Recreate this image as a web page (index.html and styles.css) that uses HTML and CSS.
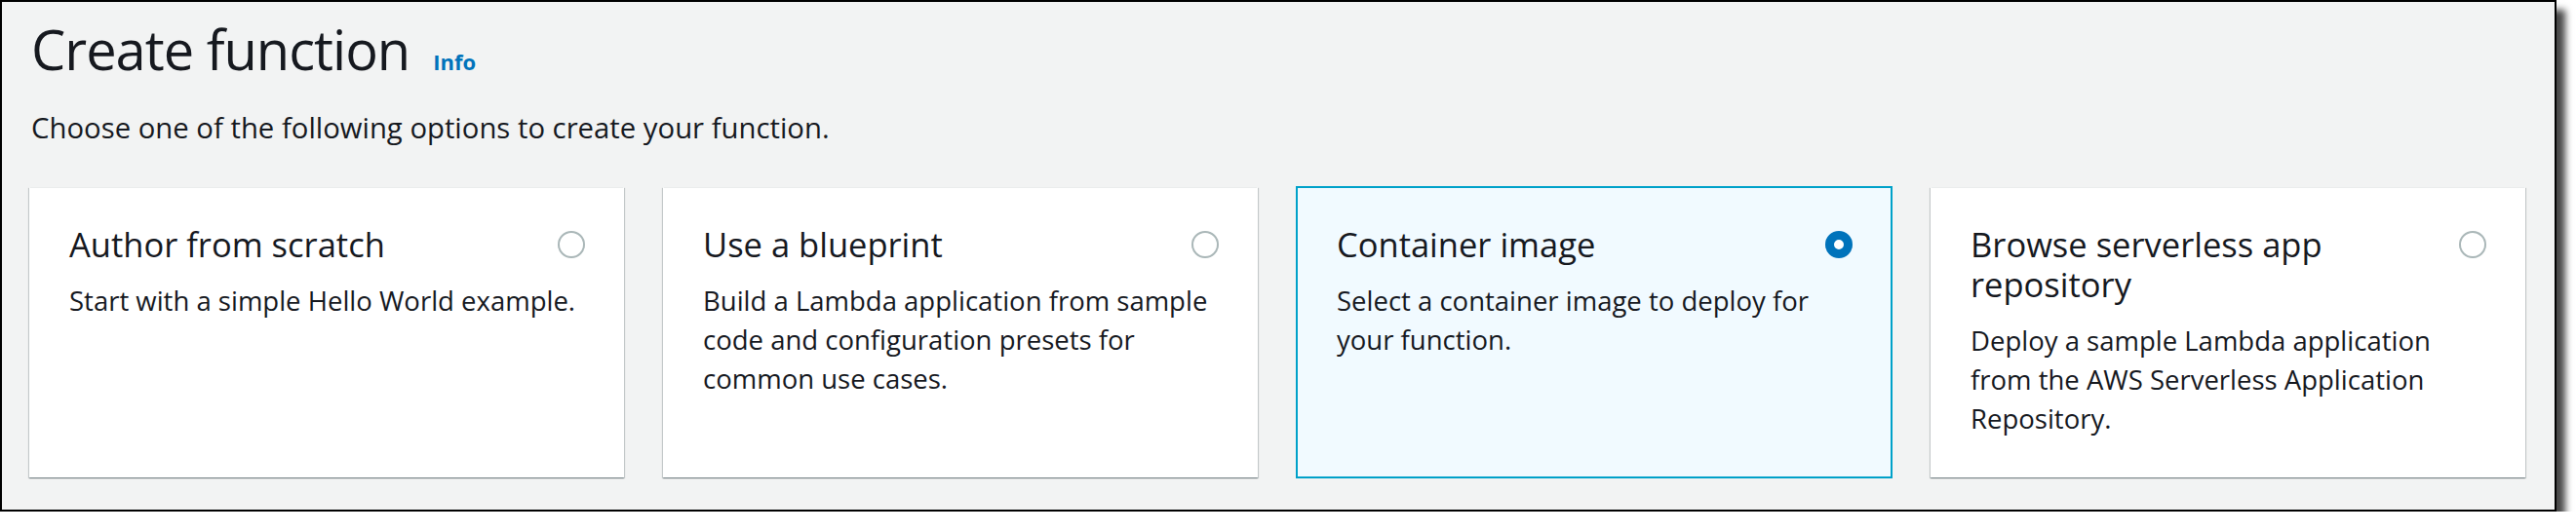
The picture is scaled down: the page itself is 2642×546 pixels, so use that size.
FILE: index.html
```html
<!DOCTYPE html>
<html lang="en">
<head>
<meta charset="utf-8">
<title>Create function</title>
<link rel="stylesheet" href="styles.css">
</head>
<body>
<div class="frame">
  <div class="page-head">
    <h1 class="page-title">Create function</h1>
    <a class="info-link" href="#">Info</a>
  </div>
  <p class="page-sub">Choose one of the following options to create your function.</p>
  <div class="tiles">
    <div class="tile">
      <div class="tile-head">
        <h2 class="tile-title">Author from scratch</h2>
        <span class="radio"></span>
      </div>
      <p class="tile-desc">Start with a simple Hello World example.</p>
    </div>
    <div class="tile">
      <div class="tile-head">
        <h2 class="tile-title">Use a blueprint</h2>
        <span class="radio"></span>
      </div>
      <p class="tile-desc">Build a Lambda application from sample code and configuration presets for common use cases.</p>
    </div>
    <div class="tile selected">
      <div class="tile-head">
        <h2 class="tile-title">Container image</h2>
        <span class="radio checked"></span>
      </div>
      <p class="tile-desc">Select a container image to deploy for your function.</p>
    </div>
    <div class="tile">
      <div class="tile-head">
        <h2 class="tile-title">Browse serverless app repository</h2>
        <span class="radio"></span>
      </div>
      <p class="tile-desc">Deploy a sample Lambda application from the AWS Serverless Application Repository.</p>
    </div>
  </div>
</div>
</body>
</html>
```

FILE: styles.css
```css
html, body {
  margin: 0;
  padding: 0;
  background: #ffffff;
}

body {
  font-family: "Open Sans", "Liberation Sans", sans-serif;
  color: #16191f;
}

.frame {
  box-sizing: border-box;
  width: 2622px;
  height: 525px;
  border: 2px solid #000000;
  background: #f2f3f3;
  padding: 13px 30px 0 28px;
  box-shadow: 9px 10px 7px rgba(0, 0, 0, 0.72);
}

.page-head {
  display: flex;
  align-items: baseline;
  gap: 24px;
  padding-left: 2px;
}

.page-title {
  margin: 0;
  font-size: 56px;
  line-height: 70px;
  font-weight: 400;
  letter-spacing: -1px;
  color: #16191f;
}

.info-link {
  font-size: 22px;
  font-weight: 700;
  color: #0073bb;
  text-decoration: none;
}

.page-sub {
  margin: 26px 0 0 2px;
  font-size: 29.3px;
  line-height: 40px;
  color: #16191f;
}

.tiles {
  margin-top: 41px;
  display: grid;
  grid-template-columns: repeat(4, 1fr);
  gap: 40px;
  height: 298px;
}

.tile {
  box-sizing: border-box;
  background: #ffffff;
  border: 1px solid transparent;
  border-top-color: #eaeded;
  box-shadow: 0 1px 1px 0 rgba(0, 28, 36, 0.3), 1px 1px 1px 0 rgba(0, 28, 36, 0.15), -1px 1px 1px 0 rgba(0, 28, 36, 0.15);
  padding: 37px 39px 36px 40px;
}

.tile.selected {
  background: #f1faff;
  border-color: #00a1c9;
  box-shadow: 0 0 0 1px #00a1c9;
}

.tile-head {
  display: flex;
  align-items: center;
  justify-content: space-between;
  gap: 24px;
}

.tile-title {
  margin: 0;
  font-size: 34.5px;
  line-height: 41px;
  font-weight: 400;
  color: #16191f;
}

.radio {
  flex: none;
  box-sizing: border-box;
  width: 28px;
  height: 28px;
  border-radius: 50%;
  border: 2px solid #aab7b8;
  background: #ffffff;
  align-self: flex-start;
  margin-top: 7px;
}

.radio.checked {
  border: 9px solid #0073bb;
}

.tile-desc {
  margin: 18px 0 0;
  font-size: 27.5px;
  line-height: 40px;
  color: #16191f;
}
```
